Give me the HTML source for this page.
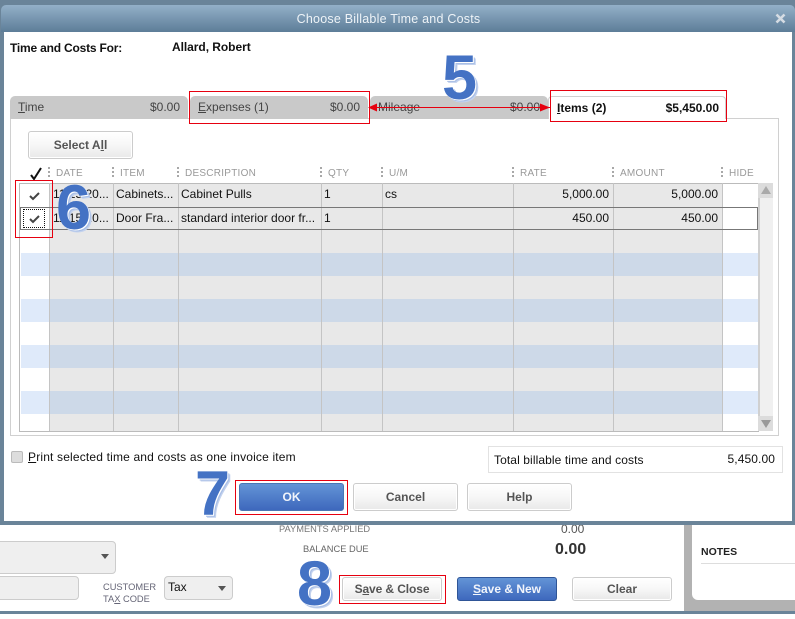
<!DOCTYPE html>
<html><head><meta charset="utf-8"><style>
html,body{margin:0;padding:0}
body{width:795px;height:614px;overflow:hidden;position:relative;background:#fff;font:12px "Liberation Sans",sans-serif;color:#111}
div{position:absolute;box-sizing:border-box;white-space:nowrap}
u{text-underline-offset:1px}
.t{line-height:14px}
.tab{top:96px;height:23px;background:#c9c9c9;border-radius:5px 5px 0 0;color:#444;line-height:22px;width:178px}
.tab span{position:absolute;left:8px}.tab b{position:absolute;right:8px;font-weight:normal}
.h{top:167px;color:#999;font-size:10px;letter-spacing:.25px;line-height:13px}
.d{top:167px;width:2px;height:12px;background:repeating-linear-gradient(#a8a8a8 0 2px,transparent 2px 4px)}
.btn{background:linear-gradient(#fff,#f7f7f7 50%,#e8e8e8);border:1px solid #ccc;border-radius:3px;text-align:center;font-weight:bold;color:#555;box-shadow:inset 0 0 0 1px #fff}
.blue{background:linear-gradient(#6394d6,#3e68bd);border:1px solid #2f5597;color:#f2f5fb;border-radius:3px;text-align:center;font-weight:bold}
.r{border:1px solid #e6000f;z-index:5}
.num{font:bold 63px/63px "Liberation Sans",sans-serif;color:#4472c4;text-shadow:1px 1px 0 #fff,2px 2px 0 #a9bfe6,3px 3px 0 #c3d2ee;z-index:6}
.row{left:49px;width:673px;height:23px}
.cell{line-height:20px}
.v{top:183px;height:248px;width:1px;background:#c4c4c4;z-index:2}
.sm{font-size:9.3px;line-height:13px;letter-spacing:0}
</style></head><body>
<!-- background bottom -->
<div style="left:0;top:611px;width:795px;height:3px;background:#6a8499"></div>
<div style="left:684px;top:525px;width:111px;height:86px;background:#b2b2b2"></div>
<div style="left:692px;top:525px;width:103px;height:75px;background:#fff;border-radius:0 0 0 6px"></div>
<div style="left:701px;top:546px;font-weight:bold;font-size:10.5px;line-height:13px;color:#222">NOTES</div>
<div style="left:701px;top:563px;width:94px;height:1px;background:#ddd"></div>
<div class="sm" style="left:279px;top:523px;color:#777">PAYMENTS APPLIED</div>
<div class="sm" style="left:303px;top:543px;color:#666">BALANCE DUE</div>
<div style="left:561px;top:522px;color:#555;line-height:14px">0.00</div>
<div style="left:555px;top:540px;font-weight:bold;font-size:16px;line-height:19px;color:#333">0.00</div>
<div style="left:-5px;top:541px;width:121px;height:33px;background:#efefef;border:1px solid #ccc;border-radius:4px"></div>
<div style="left:101px;top:554px;border:4px solid transparent;border-top:5px solid #555;border-bottom:0"></div>
<div style="left:-5px;top:576px;width:84px;height:24px;background:#efefef;border:1px solid #ccc;border-radius:4px"></div>
<div class="sm" style="left:103px;top:581px;color:#667">CUSTOMER</div>
<div class="sm" style="left:103px;top:593px;color:#667">TA<u>X</u> CODE</div>
<div style="left:164px;top:576px;width:69px;height:24px;background:#efefef;border:1px solid #ccc;border-radius:4px;line-height:21px;padding-left:3px">Tax</div>
<div style="left:218px;top:586px;border:4px solid transparent;border-top:5px solid #555;border-bottom:0"></div>
<div class="btn" style="left:342px;top:577px;width:100px;height:24px;line-height:22px;letter-spacing:-.1px">S<u>a</u>ve &amp; Close</div>
<div class="r" style="left:339px;top:575px;width:107px;height:29px"></div>
<div class="blue" style="left:457px;top:577px;width:100px;height:24px;line-height:22px"><u>S</u>ave &amp; New</div>
<div class="btn" style="left:572px;top:577px;width:100px;height:24px;line-height:22px">Clear</div>

<!-- dialog -->
<div style="left:0;top:0;width:795px;height:525px;background:#6a8499"></div>
<div style="left:1px;top:5px;width:794px;height:27px;background:linear-gradient(#93b0c8,#5d7d98);border-radius:5px 5px 0 0"></div>
<div style="left:4px;top:32px;width:788px;height:489px;background:#fff"></div>
<div class="t" style="left:0;top:12px;width:777px;text-align:center;color:#eef3f7;font-size:12.5px;letter-spacing:.22px">Choose Billable Time and Costs</div>
<svg style="position:absolute;left:775px;top:13px" width="11" height="11"><path d="M1.5 1.5L9.5 9.5M9.5 1.5L1.5 9.5" stroke="#d5dce3" stroke-width="2.6" fill="none"/></svg>
<div class="t" style="left:10px;top:41px;font-weight:bold;letter-spacing:-.2px">Time and Costs For:</div>
<div class="t" style="left:172px;top:40px;font-weight:bold;letter-spacing:-.05px">Allard, Robert</div>

<!-- panel -->
<div style="left:10px;top:118px;width:769px;height:318px;border:1px solid #d0d0d0;background:#fff"></div>
<div class="tab" style="left:10px"><span><u>T</u>ime</span><b>$0.00</b></div>
<div class="tab" style="left:190px"><span><u>E</u>xpenses (1)</span><b>$0.00</b></div>
<div class="tab" style="left:370px"><span>Milea<u>g</u>e</span><b>$0.00</b></div>
<div style="left:548px;top:96px;width:178px;height:23px;background:#fff;border:1px solid #d0d0d0;border-bottom:0;border-radius:4px 4px 0 0;line-height:22px;font-weight:bold"><span style="position:absolute;left:8px"><u>I</u>tems (2)</span><span style="position:absolute;right:6px">$5,450.00</span></div>
<div class="r" style="left:189px;top:91px;width:181px;height:33px"></div>
<div class="r" style="left:550px;top:90px;width:177px;height:32px"></div>
<svg style="position:absolute;left:360px;top:100px;z-index:5" width="200" height="14"><path d="M10 7.5H190" stroke="#e6000f" stroke-width="1" fill="none"/><path d="M8 7.5L17 3.5V11.5ZM190 7.5L180 3.5V11.5Z" fill="#e6000f"/></svg>

<div class="btn" style="left:28px;top:131px;width:105px;height:28px;line-height:26px">Select A<u>l</u>l</div>

<!-- grid header -->
<svg style="position:absolute;left:29px;top:167px" width="14" height="14"><path d="M2 8L5 12L12 1" stroke="#111" stroke-width="2" fill="none"/></svg>
<div class="d" style="left:48px"></div><div class="h" style="left:56px">DATE</div>
<div class="d" style="left:112px"></div><div class="h" style="left:120px">ITEM</div>
<div class="d" style="left:177px"></div><div class="h" style="left:185px">DESCRIPTION</div>
<div class="d" style="left:320px"></div><div class="h" style="left:328px">QTY</div>
<div class="d" style="left:381px"></div><div class="h" style="left:389px">U/M</div>
<div class="d" style="left:512px"></div><div class="h" style="left:520px">RATE</div>
<div class="d" style="left:612px"></div><div class="h" style="left:620px">AMOUNT</div>
<div class="d" style="left:721px"></div><div class="h" style="left:729px">HIDE</div>

<!-- grid -->
<div style="left:19px;top:183px;width:740px;height:249px;border:1px solid #bbb;border-right:0;background:#fff"></div>
<div class="row" style="top:184px;height:46px;background:#e8e8e8"></div>
<div class="row" style="top:230px;background:#e8e8e8"></div>
<div style="left:21px;top:253px;width:28px;height:23px;background:#dfeafa"></div><div class="row" style="top:253px;background:#cdd9e8"></div><div style="left:722px;top:253px;width:36px;height:23px;background:#dfeafa"></div>
<div class="row" style="top:276px;background:#e8e8e8"></div>
<div style="left:21px;top:299px;width:28px;height:23px;background:#dfeafa"></div><div class="row" style="top:299px;background:#cdd9e8"></div><div style="left:722px;top:299px;width:36px;height:23px;background:#dfeafa"></div>
<div class="row" style="top:322px;background:#e8e8e8"></div>
<div style="left:21px;top:345px;width:28px;height:23px;background:#dfeafa"></div><div class="row" style="top:345px;background:#cdd9e8"></div><div style="left:722px;top:345px;width:36px;height:23px;background:#dfeafa"></div>
<div class="row" style="top:368px;background:#e8e8e8"></div>
<div style="left:21px;top:391px;width:28px;height:23px;background:#dfeafa"></div><div class="row" style="top:391px;background:#cdd9e8"></div><div style="left:722px;top:391px;width:36px;height:23px;background:#dfeafa"></div>
<div class="row" style="top:414px;height:17px;background:#e8e8e8"></div>
<div class="v" style="left:49px"></div><div class="v" style="left:113px"></div><div class="v" style="left:178px"></div><div class="v" style="left:321px"></div><div class="v" style="left:382px"></div><div class="v" style="left:513px"></div><div class="v" style="left:613px"></div><div class="v" style="left:722px"></div>
<div style="left:20px;top:207px;width:738px;height:23px;border:1px solid #777;z-index:3"></div>
<div style="left:23px;top:209px;width:22px;height:19px;border:1px dotted #111;z-index:3"></div>

<!-- rows text -->
<svg style="position:absolute;left:28px;top:191px;z-index:4" width="14" height="10"><path d="M2 5L5 8L11 2" stroke="#444" stroke-width="2" fill="none"/></svg>
<svg style="position:absolute;left:28px;top:214px;z-index:4" width="14" height="10"><path d="M2 5L5 8L11 2" stroke="#444" stroke-width="2" fill="none"/></svg>
<div class="cell" style="left:53px;top:184px;z-index:4">11/15/20...</div>
<div class="cell" style="left:116px;top:184px;z-index:4">Cabinets...</div>
<div class="cell" style="left:181px;top:184px;z-index:4">Cabinet Pulls</div>
<div class="cell" style="left:324px;top:184px;z-index:4">1</div>
<div class="cell" style="left:385px;top:184px;z-index:4">cs</div>
<div class="cell" style="right:186px;top:184px;z-index:4">5,000.00</div>
<div class="cell" style="right:77px;top:184px;z-index:4">5,000.00</div>
<div class="cell" style="left:53px;top:208px;z-index:4">11/15/20...</div>
<div class="cell" style="left:116px;top:208px;z-index:4">Door Fra...</div>
<div class="cell" style="left:181px;top:208px;z-index:4">standard interior door fr...</div>
<div class="cell" style="left:324px;top:208px;z-index:4">1</div>
<div class="cell" style="right:186px;top:208px;z-index:4">450.00</div>
<div class="cell" style="right:77px;top:208px;z-index:4">450.00</div>

<!-- scrollbar -->
<div style="left:758px;top:183px;width:15px;height:248px;background:#f0f0f0;border-left:2px solid #d0d0d0;z-index:3"></div>
<div style="left:758px;top:183px;width:15px;height:15px;background:#dcdcdc;z-index:3"></div>
<div style="left:761px;top:186px;border:5px solid transparent;border-bottom:8px solid #aaa;border-top:0;z-index:4"></div>
<div style="left:758px;top:416px;width:15px;height:15px;background:#dcdcdc;z-index:3"></div>
<div style="left:761px;top:420px;border:5px solid transparent;border-top:8px solid #999;border-bottom:0;z-index:4"></div>

<!-- bottom of dialog -->
<div style="left:11px;top:451px;width:12px;height:12px;background:#ddd;border:1px solid #bbb;border-radius:2px"></div>
<div class="t" style="left:28px;top:450px;letter-spacing:.17px"><u>P</u>rint selected time and costs as one invoice item</div>
<div style="left:488px;top:446px;width:295px;height:27px;border:1px solid #e2e2e2;line-height:26px;padding-left:5px;letter-spacing:.1px">Total billable time and costs<span style="position:absolute;right:7px;top:-1px">5,450.00</span></div>
<div class="blue" style="left:239px;top:483px;width:105px;height:28px;line-height:26px;border-color:#4a76b4">OK</div>
<div class="r" style="left:235px;top:480px;width:113px;height:35px"></div>
<div class="btn" style="left:353px;top:483px;width:105px;height:28px;line-height:26px">Cancel</div>
<div class="btn" style="left:467px;top:483px;width:105px;height:28px;line-height:26px">Help</div>

<div class="r" style="left:15px;top:180px;width:38px;height:58px"></div>

<!-- numbers -->
<div class="num" style="left:442px;top:47px">5</div>
<div class="num" style="left:56px;top:177px">6</div>
<div class="num" style="left:195px;top:463px">7</div>
<div class="num" style="left:297px;top:553px">8</div>
</body></html>
